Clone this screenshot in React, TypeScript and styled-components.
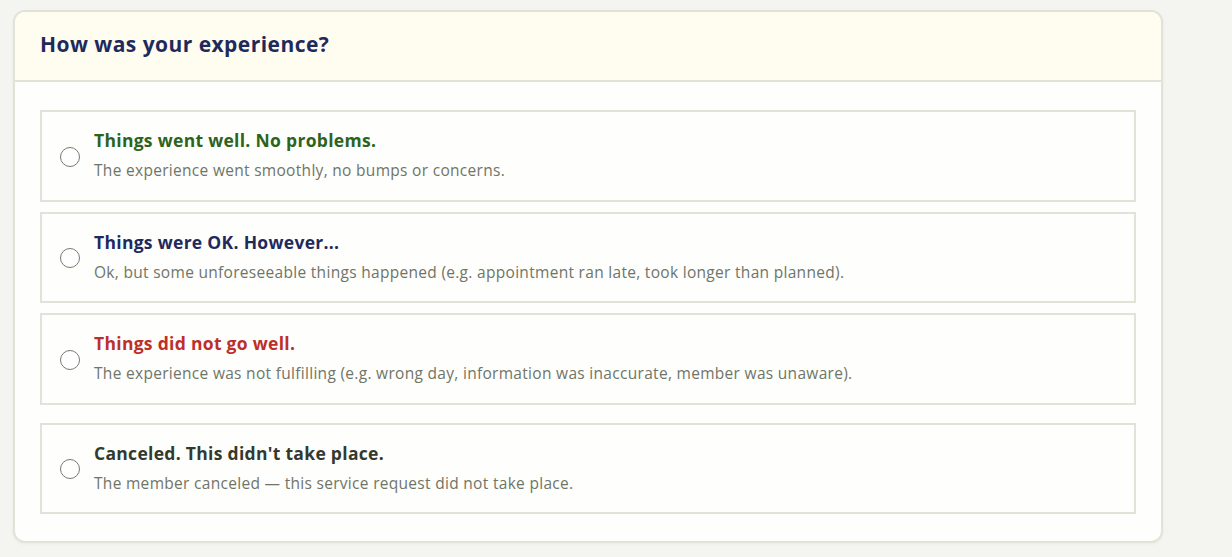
import React, { useState } from 'react';
import styled, { createGlobalStyle } from 'styled-components';

const GlobalStyle = createGlobalStyle`
  html, body {
    margin: 0;
    padding: 0;
    background: #f4f5f0;
    font-family: "Open Sans", "Noto Sans", sans-serif;
  }
`;

const Page = styled.div`
  padding: 10px 69px 14px 13px;
`;

const Card = styled.section`
  background: #fefefc;
  border: 2px solid #e1e3d8;
  border-radius: 12px;
  overflow: hidden;
  box-shadow: 0 1px 3px rgba(60, 70, 40, 0.06);
`;

const Header = styled.header`
  height: 70px;
  box-sizing: border-box;
  display: flex;
  align-items: center;
  padding: 0 25px 5px;
  background: #fffcf0;
  border-bottom: 2px solid #e1e3d8;
`;

const Title = styled.h2`
  margin: 0;
  font-size: 21px;
  letter-spacing: 0.45px;
  font-weight: 700;
  color: #1f2a5c;
`;

const Options = styled.div`
  display: flex;
  flex-direction: column;
  gap: 10px;
  padding: 28px 25px 27px;
`;

type Tone = 'good' | 'ok' | 'bad' | 'cancel';

const toneColors: Record<Tone, string> = {
  good: '#2d631c',
  ok: '#1f2a5c',
  bad: '#bd2f2a',
  cancel: '#33392d',
};

const Option = styled.label<{ $spaced?: boolean }>`
  display: flex;
  align-items: center;
  gap: 14px;
  height: 91.5px;
  box-sizing: border-box;
  padding: 0 18px;
  border: 2px solid #e1e3d8;
  background: #fefefc;
  cursor: pointer;
  margin-top: ${(p) => (p.$spaced ? '8px' : '0')};
`;

const Radio = styled.span<{ $checked: boolean }>`
  flex: none;
  width: 20px;
  height: 20px;
  box-sizing: border-box;
  border-radius: 50%;
  border: 1.5px solid #777a72;
  background: #fff;
  margin-top: 2px;
  position: relative;

  &::after {
    content: '';
    display: ${(p) => (p.$checked ? 'block' : 'none')};
    position: absolute;
    inset: 4px;
    border-radius: 50%;
    background: #1f2a5c;
  }
`;

const Texts = styled.div`
  display: flex;
  flex-direction: column;
  gap: 9px;
  margin-top: -2px;
`;

const OptionTitle = styled.span<{ $tone: Tone }>`
  font-size: 17.5px;
  letter-spacing: 0.3px;
  font-weight: 700;
  line-height: 22px;
  color: ${(p) => toneColors[p.$tone]};
`;

const OptionText = styled.span`
  font-size: 15.5px;
  letter-spacing: 0.3px;
  line-height: 20px;
  color: #6f7568;
`;

const choices: { id: string; tone: Tone; title: string; text: string }[] = [
  {
    id: 'good',
    tone: 'good',
    title: 'Things went well. No problems.',
    text: 'The experience went smoothly, no bumps or concerns.',
  },
  {
    id: 'ok',
    tone: 'ok',
    title: 'Things were OK. However...',
    text: 'Ok, but some unforeseeable things happened (e.g. appointment ran late, took longer than planned).',
  },
  {
    id: 'bad',
    tone: 'bad',
    title: 'Things did not go well.',
    text: 'The experience was not fulfilling (e.g. wrong day, information was inaccurate, member was unaware).',
  },
  {
    id: 'cancel',
    tone: 'cancel',
    title: "Canceled. This didn't take place.",
    text: 'The member canceled \u2014 this service request did not take place.',
  },
];

const App = () => {
  const [picked, setPicked] = useState<string | null>(null);

  return (
    <>
      <GlobalStyle />
      <Page>
        <Card>
          <Header>
            <Title>How was your experience?</Title>
          </Header>
          <Options>
            {choices.map((c) => (
              <Option key={c.id} $spaced={c.id === 'cancel'} onClick={() => setPicked(c.id)}>
                <Radio $checked={picked === c.id} />
                <Texts>
                  <OptionTitle $tone={c.tone}>{c.title}</OptionTitle>
                  <OptionText>{c.text}</OptionText>
                </Texts>
              </Option>
            ))}
          </Options>
        </Card>
      </Page>
    </>
  );
};

export default App;
